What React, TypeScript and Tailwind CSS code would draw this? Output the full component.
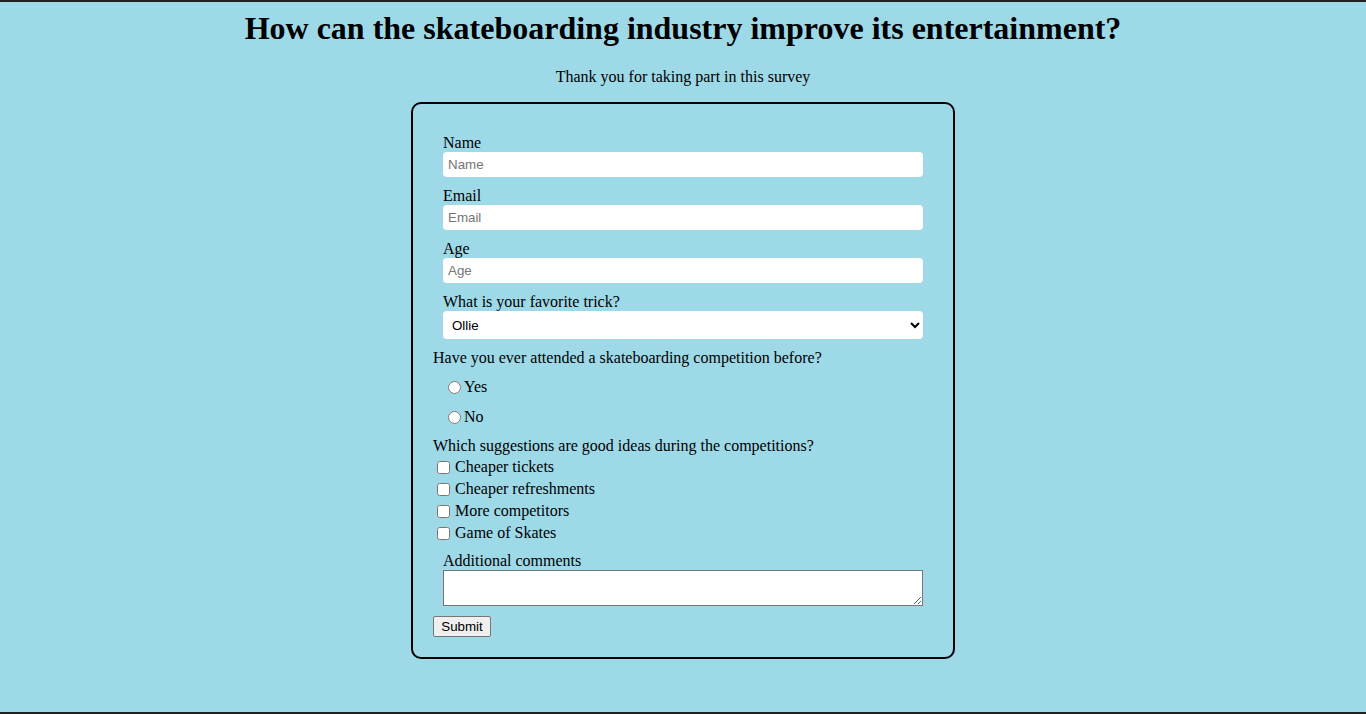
export default function App() {
  return (
    <div className="min-h-screen w-full border-y-2 border-[#202124] bg-[#9ed9e8] font-['Liberation_Serif',serif] text-[16px] leading-[18px] text-black">
      {/* Header */}
      <h1 className="mt-[8px] mb-[21px] text-center text-[32px] font-bold leading-[37px]">
        How can the skateboarding industry improve its entertainment?
      </h1>
      <p className="mb-[16px] text-center leading-[18px]">Thank you for taking part in this survey</p>

      {/* Survey form */}
      <form className="mx-auto w-[544px] rounded-[10px] border-2 border-black p-[20px]">
        <div className="mx-[10px] mt-[10px]">
          <label className="block leading-[18px]">Name</label>
          <input
            type="text"
            placeholder="Name"
            className="block h-[25px] w-full rounded-[4px] bg-white px-[5px] font-['Liberation_Sans',sans-serif] text-[13.33px] placeholder:text-[#757575]"
          />
        </div>
        <div className="mx-[10px] mt-[10px]">
          <label className="block leading-[18px]">Email</label>
          <input
            type="email"
            placeholder="Email"
            className="block h-[25px] w-full rounded-[4px] bg-white px-[5px] font-['Liberation_Sans',sans-serif] text-[13.33px] placeholder:text-[#757575]"
          />
        </div>
        <div className="mx-[10px] mt-[10px]">
          <label className="block leading-[18px]">Age</label>
          <input
            type="number"
            placeholder="Age"
            className="block h-[25px] w-full rounded-[4px] bg-white px-[5px] font-['Liberation_Sans',sans-serif] text-[13.33px] placeholder:text-[#757575]"
          />
        </div>
        <div className="mx-[10px] my-[10px]">
          <label className="block leading-[18px]">What is your favorite trick?</label>
          <select className="block h-[28px] w-full rounded-[4px] bg-white pl-[5px] font-['Liberation_Sans',sans-serif] text-[13.33px]">
            <option>Ollie</option>
            <option>Kickflip</option>
            <option>Heelflip</option>
          </select>
        </div>

        <p className="leading-[18px]">Have you ever attended a skateboarding competition before?</p>
        <label className="my-[10px] flex h-[20px] items-center pl-[10px]">
          <input type="radio" name="attended" className="mr-[3px] ml-[5px] h-[13px] w-[13px]" />
          Yes
        </label>
        <label className="my-[10px] flex h-[20px] items-center pl-[10px]">
          <input type="radio" name="attended" className="mr-[3px] ml-[5px] h-[13px] w-[13px]" />
          No
        </label>

        <p className="mt-[10px] leading-[18px]">Which suggestions are good ideas during the competitions?</p>
        <div className="pt-[1px]">
          {['Cheaper tickets', 'Cheaper refreshments', 'More competitors', 'Game of Skates'].map((s) => (
            <label key={s} className="flex h-[22px] items-center">
              <input type="checkbox" className="mr-[5px] ml-[4px] h-[13px] w-[13px]" />
              {s}
            </label>
          ))}
        </div>

        <div className="mx-[10px] mt-[8px]">
          <label className="block leading-[18px]">Additional comments</label>
          <textarea className="mb-[10px] block h-[36px] w-full border border-[#767676] bg-white p-[2px] font-['Liberation_Mono',monospace] text-[13.33px]" />
        </div>
        <button
          type="submit"
          className="h-[21px] w-[58px] rounded-[2px] border border-[#767676] bg-[#efefef] font-['Liberation_Sans',sans-serif] text-[13.33px] leading-[17px]"
        >
          Submit
        </button>
      </form>
    </div>
  );
}
